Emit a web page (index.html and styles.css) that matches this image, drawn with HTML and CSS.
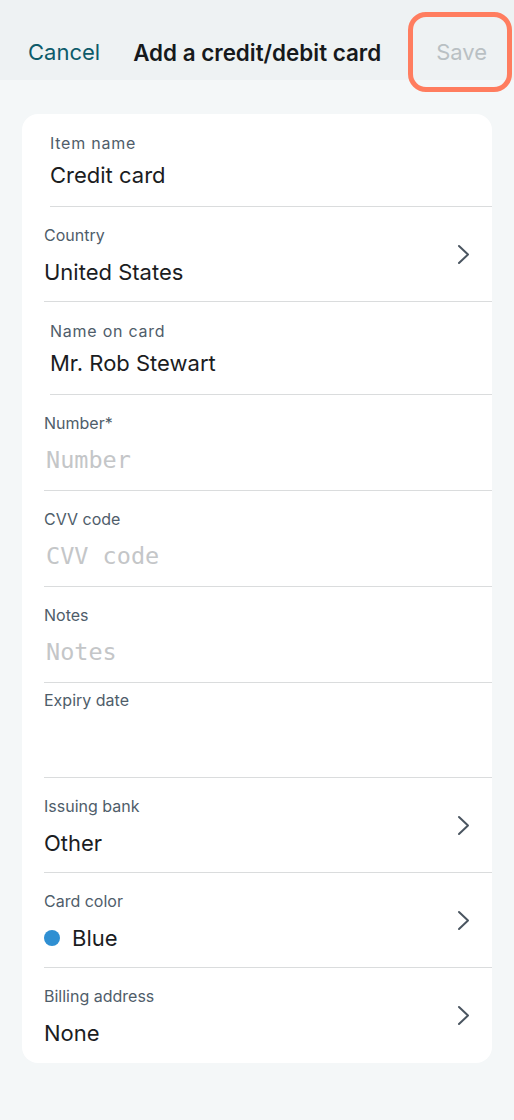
FILE: index.html
```html
<!DOCTYPE html>
<html lang="en">
<head>
<meta charset="utf-8">
<title>Add a credit/debit card</title>
<link rel="stylesheet" href="styles.css">
</head>
<body>
<header class="topbar">
  <span class="cancel">Cancel</span>
  <h1 class="title">Add a credit/debit card</h1>
  <span class="save">Save</span>
  <span class="highlight"></span>
</header>
<main class="page">
  <section class="card">
    <div class="row inset first">
      <div class="label">Item name</div>
      <div class="value">Credit card</div>
    </div>
    <div class="row nav">
      <div class="col">
        <div class="label">Country</div>
        <div class="value">United States</div>
      </div>
      <svg class="chev" viewBox="0 0 13 21"><path d="M2 2 L11 10.5 L2 19"/></svg>
    </div>
    <div class="row inset">
      <div class="label">Name on card</div>
      <div class="value">Mr. Rob Stewart</div>
    </div>
    <div class="row field">
      <div class="label">Number*</div>
      <div class="placeholder">Number</div>
    </div>
    <div class="row field">
      <div class="label">CVV code</div>
      <div class="placeholder">CVV code</div>
    </div>
    <div class="row field">
      <div class="label">Notes</div>
      <div class="placeholder">Notes</div>
    </div>
    <div class="row expiry">
      <div class="label">Expiry date</div>
    </div>
    <div class="row nav">
      <div class="col">
        <div class="label">Issuing bank</div>
        <div class="value">Other</div>
      </div>
      <svg class="chev" viewBox="0 0 13 21"><path d="M2 2 L11 10.5 L2 19"/></svg>
    </div>
    <div class="row nav">
      <div class="col">
        <div class="label">Card color</div>
        <div class="value color"><span class="dot"></span>Blue</div>
      </div>
      <svg class="chev" viewBox="0 0 13 21"><path d="M2 2 L11 10.5 L2 19"/></svg>
    </div>
    <div class="row nav last">
      <div class="col">
        <div class="label">Billing address</div>
        <div class="value">None</div>
      </div>
      <svg class="chev" viewBox="0 0 13 21"><path d="M2 2 L11 10.5 L2 19"/></svg>
    </div>
  </section>
</main>
</body>
</html>
```

FILE: styles.css
```css
* { box-sizing: border-box; }
html, body { margin: 0; padding: 0; }
body {
  background: #f4f7f8;
  font-family: Inter, "Noto Sans", "Liberation Sans", sans-serif;
  width: 514px;
  height: 1120px;
  overflow: hidden;
}
.topbar {
  position: relative;
  height: 80px;
  background: #eef2f3;
  display: flex;
  align-items: center;
  padding: 24px 0 0 28px;
}
.cancel {
  font-size: 22px;
  color: #0d5b6a;
}
.title {
  margin: 0 0 0 33px;
  font-size: 22.4px;
  font-weight: 600;
  color: #16191c;
}
.save {
  margin-left: 55px;
  font-size: 22px;
  color: #b9c0c3;
}
.highlight {
  position: absolute;
  left: 408px;
  top: 12px;
  width: 104px;
  height: 80px;
  border: 5px solid #ff7d5f;
  border-radius: 18px;
}
.page {
  padding: 34px 22px 0;
}
.card {
  background: #ffffff;
  border-radius: 16px;
  padding-left: 22px;
}
.row {
  height: 95px;
  border-bottom: 1px solid #dadcdd;
  padding-top: 17px;
  display: flex;
  flex-direction: column;
}
.row.last { border-bottom: none; height: 95px; }
.row.inset { margin-left: 6px; padding-top: 19px; height: 93px; }
.row.first { height: 93px; }
.label {
  font-size: 16px;
  line-height: 20px;
  color: #4f5d6a;
}
.inset .label { letter-spacing: 0.75px; }
.value {
  font-size: 22px;
  line-height: 28px;
  color: #1b1d1f;
}
.inset .value { margin-top: 8px; }
.nav {
  flex-direction: row;
  align-items: center;
  padding-top: 0;
  padding-right: 22px;
}
.nav .col { flex: 1; padding-top: 2px; }
.nav .value { margin-top: 13px; }
.chev {
  width: 13px;
  height: 21px;
  fill: none;
  stroke: #4a5560;
  stroke-width: 2;
  stroke-linecap: round;
  stroke-linejoin: round;
}
.field { padding-top: 18px; height: 96px; }
.placeholder {
  margin: 13px 0 0 2px;
  font-family: "DejaVu Sans Mono", "Liberation Mono", monospace;
  font-size: 23.5px;
  line-height: 28px;
  color: #c4c6c8;
}
.expiry { padding-top: 7px; }
.color { display: flex; align-items: center; }
.dot {
  width: 16px;
  height: 16px;
  border-radius: 50%;
  background: #2f8fd2;
  margin-right: 12px;
}
```
